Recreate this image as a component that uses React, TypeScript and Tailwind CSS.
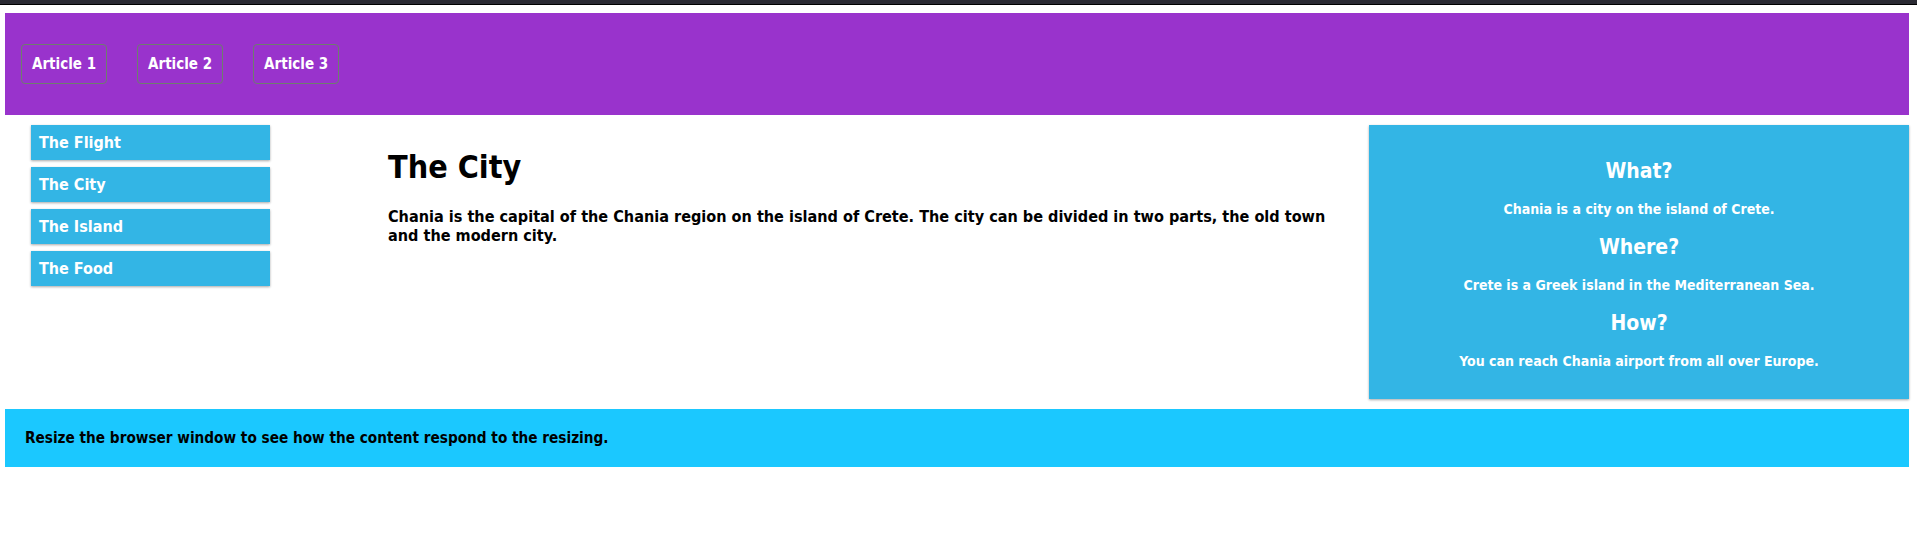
const ARTICLES = ['Article 1', 'Article 2', 'Article 3'];
const MENU = ['The Flight', 'The City', 'The Island', 'The Food'];
const FACTS = [
  { title: 'What?', text: 'Chania is a city on the island of Crete.' },
  { title: 'Where?', text: 'Crete is a Greek island in the Mediterranean Sea.' },
  { title: 'How?', text: 'You can reach Chania airport from all over Europe.' },
];

const cardShadow = 'shadow-[0_1px_3px_rgba(0,0,0,0.12),0_1px_2px_rgba(0,0,0,0.24)]';

export default function App() {
  return (
    <div className="min-h-[546px] bg-white font-['DejaVu_Sans_Condensed','DejaVu_Sans',sans-serif] font-bold font-stretch-condensed leading-[normal] text-black">
      <div className="h-[5px] border-b border-black bg-[#2a2a33]" />

      <div className="pl-[5px] pr-[8px] pt-[8px]">
        <header className="flex h-[102px] items-center gap-[30px] bg-[#9933cc] px-[16px]">
          {ARTICLES.map((label) => (
            <button
              key={label}
              type="button"
              className="rounded-[4px] border border-[#6e7d6e] px-[10px] py-[10px] text-[15px] font-bold leading-[normal] text-white"
            >
              {label}
            </button>
          ))}
        </header>

        <div className="flex pt-[10px]">
          <nav className="w-[368px] shrink-0 pl-[26px]">
            <ul className="w-[239px]">
              {MENU.map((item) => (
                <li key={item} className={`mb-[7px] bg-[#33b5e5] p-[8px] text-[16px] text-white ${cardShadow}`}>
                  {item}
                </li>
              ))}
            </ul>
          </nav>

          <main className="min-w-0 flex-1 px-[15px]">
            <h1 className="mt-[23px] mb-[21px] text-[32px]">The City</h1>
            <p className="text-[16.1px]">
              Chania is the capital of the Chania region on the island of Crete. The city can be divided in two parts, the
              old town and the modern city.
            </p>
          </main>

          <aside
            className={`w-[540px] shrink-0 bg-[#33b5e5] px-[15px] pt-[17px] pb-[12px] text-center text-[14px] text-white ${cardShadow}`}
          >
            {FACTS.map((fact) => (
              <div key={fact.title} className="contents">
                <h2 className="my-[17px] text-[21px] leading-[25px]">{fact.title}</h2>
                <p className="my-[17px] leading-[17px]">{fact.text}</p>
              </div>
            ))}
          </aside>
        </div>

        <footer className="mt-[10px] bg-[#1bc8ff] p-[20px] text-[15.2px]">
          <p>Resize the browser window to see how the content respond to the resizing.</p>
        </footer>
      </div>
    </div>
  );
}
